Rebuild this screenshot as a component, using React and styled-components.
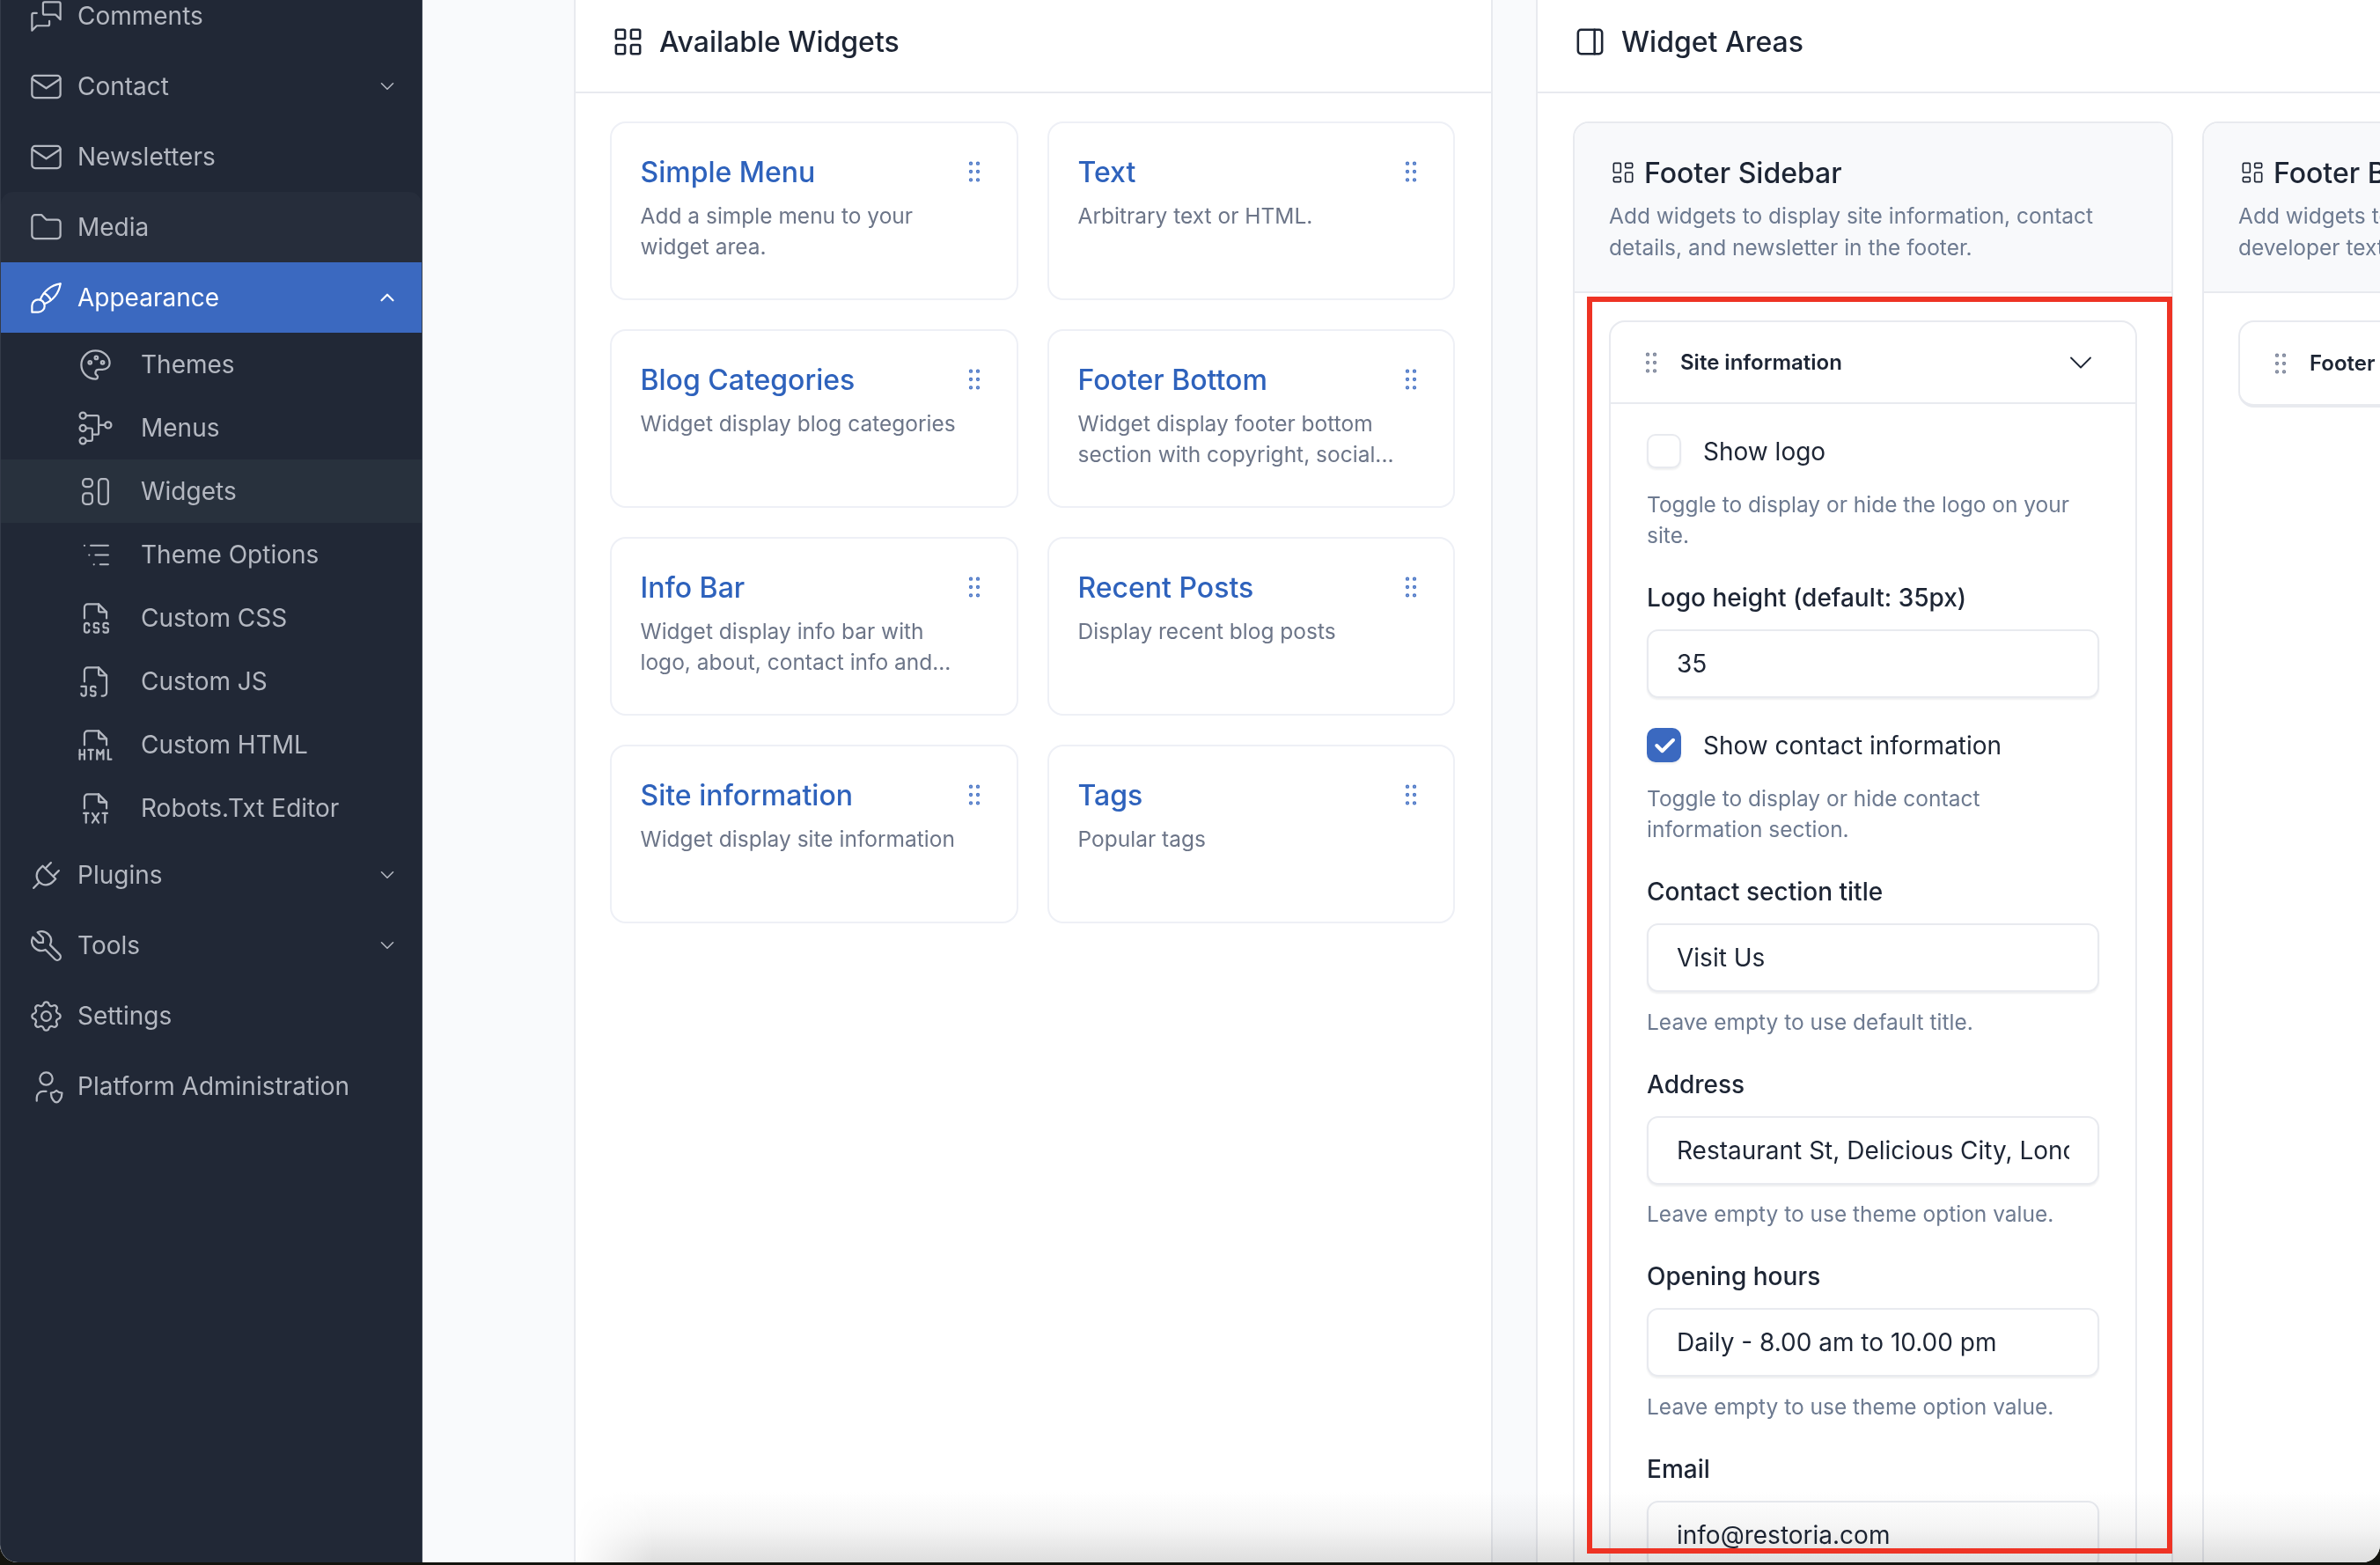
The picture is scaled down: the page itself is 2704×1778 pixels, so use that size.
import React from 'react';
import styled, { createGlobalStyle } from 'styled-components';
import {
  TbMessages, TbMail, TbFolder, TbBrush, TbPalette, TbTournament, TbLayout, TbListTree,
  TbFileTypeCss, TbFileTypeJs, TbFileTypeHtml, TbFileTypeTxt, TbPlug, TbTool, TbSettings,
  TbUserShield, TbChevronDown, TbChevronUp, TbLayoutGrid, TbLayoutSidebarRight,
  TbLayoutDashboard, TbGripVertical, TbCheck,
} from 'react-icons/tb';

const GlobalStyle = createGlobalStyle`
  html, body {
    margin: 0;
    height: 100%;
    overflow: hidden;
    background: #14140f;
  }
  * { box-sizing: border-box; }
  body { font-family: Inter, "Noto Sans", sans-serif; }
`;

const Screen = styled.div`
  position: relative;
  width: 2704px;
  height: 1775px;
  display: flex;
  overflow: hidden;
  background: #f9fafc;
  border-radius: 0 0 20px 20px;
`;

const Sidebar = styled.aside`
  flex: 0 0 480px;
  background: #212836;
  border-left: 1px solid #343b49;
  border-right: 1px solid #3a4250;
  border-bottom-left-radius: 20px;
  overflow: hidden;
`;

const NavList = styled.nav`
  margin-top: -22px;
`;

const NavRow = styled.div`
  height: 80px;
  display: flex;
  align-items: center;
  gap: 14px;
  padding: 0 26px 0 30px;
  font-size: 28px;
  color: ${(p) => (p.$active ? '#ffffff' : '#b4b8c1')};
  background: ${(p) => (p.$active ? '#3b69c0' : p.$soft ? '#262d3b' : 'transparent')};
  border-radius: ${(p) => (p.$soft ? '14px 14px 0 0' : '0')};
`;

const NavLabel = styled.span`
  flex: 1;
`;

const SubRow = styled.div`
  height: 72px;
  display: flex;
  align-items: center;
  gap: 30px;
  padding-left: 86px;
  font-size: 28px;
  color: #b4b8c1;
  background: ${(p) => (p.$current ? '#28313d' : 'transparent')};
`;

const Content = styled.main`
  flex: 1;
  min-width: 0;
  display: flex;
  gap: 49px;
  padding-left: 172px;
`;

const Panel = styled.section`
  flex: ${(p) => (p.$wide ? '0 0 1200px' : '0 0 1044px')};
  display: flex;
  flex-direction: column;
  background: #ffffff;
  border-left: 2px solid #e8eaef;
  border-right: ${(p) => (p.$wide ? '0' : '2px solid #e8eaef')};
`;

const PanelHead = styled.header`
  flex: none;
  height: 106px;
  display: flex;
  align-items: center;
  gap: 15px;
  padding: 0 0 9px 39px;
  border-bottom: 2px solid #e8eaef;
  font-size: 32px;
  font-weight: 500;
  color: #1d2534;
`;

const WidgetGrid = styled.div`
  display: grid;
  grid-template-columns: 464px 463px;
  gap: 33px;
  padding: 32px 0 0 39px;
  justify-content: start;
`;

const WidgetCard = styled.article`
  height: 203px;
  padding: 35px 32px 0 32.5px;
  background: #fff;
  border: 2px solid #eef0f6;
  border-radius: 18px;
`;

const CardTop = styled.div`
  display: flex;
  align-items: center;
  justify-content: space-between;
  height: 40px;
  margin-bottom: 13px;
`;

const CardTitle = styled.h3`
  margin: 0;
  font-size: 32px;
  font-weight: 500;
  color: #2e62bc;
`;

const CardText = styled.p`
  margin: 0;
  max-width: 372px;
  font-size: 24.5px;
  line-height: 35px;
  color: #6c7588;
`;

const Columns = styled.div`
  flex: 1;
  display: flex;
  gap: 33px;
  padding: 32px 0 0 40px;
`;

const AreaColumn = styled.div`
  flex: 0 0 682px;
  display: flex;
  flex-direction: column;
  border-radius: 18px 18px 0 0;
  border: 2px solid #e8eaef;
  border-bottom: 0;
`;

const AreaHead = styled.div`
  height: 193px;
  padding: 36px 20px 0 39px;
  background: #f8f9fb;
  border-bottom: 2px solid #e8eaef;
  border-radius: 16px 16px 0 0;
`;

const AreaTitle = styled.h2`
  display: flex;
  align-items: center;
  gap: 8px;
  height: 40px;
  margin: 0 0 12px;
  font-size: 32px;
  font-weight: 500;
  color: #1d2534;
`;

const AreaText = styled.p`
  margin: 0;
  font-size: 24.5px;
  line-height: 35.5px;
  color: #6d7a90;
`;

const AreaBody = styled.div`
  flex: 1;
  padding: 31px 39px 0;
`;

const Item = styled.div`
  width: ${(p) => (p.$open ? '600px' : '100%')};
  background: #fff;
  border: 2px solid #e8eaef;
  border-bottom-width: ${(p) => (p.$open ? '2px' : '4px')};
  border-radius: 18px 18px ${(p) => (p.$open ? '0 0' : '18px 18px')};
`;

const ItemHead = styled.div`
  height: 93px;
  display: flex;
  align-items: center;
  gap: 17px;
  padding: 0 40px 0 30px;
  font-size: 24px;
  font-weight: 600;
  color: #1d2534;
  white-space: nowrap;
  border-bottom: ${(p) => (p.$open ? '2px solid #e8eaef' : '0')};
`;

const ItemName = styled.span`
  flex: 1;
`;

const ItemBody = styled.div`
  padding: 34px 41px 0;
`;

const CheckRow = styled.div`
  display: flex;
  align-items: center;
  gap: 25px;
  height: 39px;
  margin-bottom: 24px;
  font-size: 28px;
  color: #1d2534;
`;

const CheckBox = styled.span`
  flex: none;
  width: 39px;
  height: 39px;
  display: flex;
  align-items: center;
  justify-content: center;
  color: #fff;
  border-radius: 10px;
  background: ${(p) => (p.$checked ? '#3b69c0' : '#fff')};
  border: ${(p) => (p.$checked ? '0' : '2px solid #e8eaef')};
  box-shadow: 0 2px 2px rgba(30, 40, 60, 0.07);
`;

const Field = styled.div`
  margin-bottom: ${(p) => (p.$tight ? '34px' : '36px')};
`;

const FieldLabel = styled.label`
  display: block;
  height: 35px;
  margin-bottom: 18px;
  font-size: 28px;
  line-height: 35px;
  font-weight: 500;
  color: #1d2534;
`;

const TextInput = styled.input`
  display: block;
  width: 100%;
  height: 78px;
  padding: 0 32px;
  font: 400 28px Inter, "Noto Sans", sans-serif;
  color: #1d2534;
  background: #fff;
  border: 2px solid #e8eaef;
  border-radius: 13px;
  box-shadow: 0 2px 2px rgba(30, 40, 60, 0.07);
  outline: none;
`;

const HelpText = styled.p`
  margin: ${(p) => (p.$afterInput ? '16.5px 0 0' : '0')};
  max-width: 500px;
  font-size: 24.5px;
  line-height: 35px;
  color: #6d7a90;
`;

const BottomFade = styled.div`
  position: absolute;
  left: 652px;
  right: 0;
  bottom: 0;
  height: 80px;
  pointer-events: none;
  background: linear-gradient(to bottom, #ffffff, #f5f5f5 50%, #dedede);
  mix-blend-mode: multiply;
  mask-image: linear-gradient(to right, transparent, #000 90px);
`;

const RedFrame = styled.div`
  position: absolute;
  left: 1803px;
  top: 337px;
  width: 665px;
  height: 1428px;
  border: 6px solid #ee3324;
  pointer-events: none;
`;

const icon = { size: 43, strokeWidth: 1.25 };

const navBefore = [
  { label: 'Comments', Icon: TbMessages },
  { label: 'Contact', Icon: TbMail, arrow: true },
  { label: 'Newsletters', Icon: TbMail },
  { label: 'Media', Icon: TbFolder, soft: true },
];

const subNav = [
  { label: 'Themes', Icon: TbPalette },
  { label: 'Menus', Icon: TbTournament },
  { label: 'Widgets', Icon: TbLayout, current: true },
  { label: 'Theme Options', Icon: TbListTree },
  { label: 'Custom CSS', Icon: TbFileTypeCss },
  { label: 'Custom JS', Icon: TbFileTypeJs },
  { label: 'Custom HTML', Icon: TbFileTypeHtml },
  { label: 'Robots.Txt Editor', Icon: TbFileTypeTxt },
];

const navAfter = [
  { label: 'Plugins', Icon: TbPlug, arrow: true },
  { label: 'Tools', Icon: TbTool, arrow: true },
  { label: 'Settings', Icon: TbSettings },
  { label: 'Platform Administration', Icon: TbUserShield },
];

const widgets = [
  ['Simple Menu', 'Add a simple menu to your widget area.'],
  ['Text', 'Arbitrary text or HTML.'],
  ['Blog Categories', 'Widget display blog categories'],
  ['Footer Bottom', 'Widget display footer bottom section with copyright, social...'],
  ['Info Bar', 'Widget display info bar with logo, about, contact info and...'],
  ['Recent Posts', 'Display recent blog posts'],
  ['Site information', 'Widget display site information'],
  ['Tags', 'Popular tags'],
];

const NavItem = ({ item }) => (
  <NavRow $soft={item.soft}>
    <item.Icon {...icon} />
    <NavLabel>{item.label}</NavLabel>
    {item.arrow && <TbChevronDown size={26} strokeWidth={1.5} />}
  </NavRow>
);

const App = () => (
  <Screen>
    <GlobalStyle />
    <Sidebar>
      <NavList>
        {navBefore.map((item) => <NavItem key={item.label} item={item} />)}
        <NavRow $active>
          <TbBrush {...icon} />
          <NavLabel>Appearance</NavLabel>
          <TbChevronUp size={26} strokeWidth={2} />
        </NavRow>
        {subNav.map(({ label, Icon, current }) => (
          <SubRow key={label} $current={current}>
            <Icon {...icon} />
            {label}
          </SubRow>
        ))}
        {navAfter.map((item) => <NavItem key={item.label} item={item} />)}
      </NavList>
    </Sidebar>

    <Content>
      <Panel>
        <PanelHead>
          <TbLayoutGrid size={41} strokeWidth={1.5} />
          Available Widgets
        </PanelHead>
        <WidgetGrid>
          {widgets.map(([title, text]) => (
            <WidgetCard key={title}>
              <CardTop>
                <CardTitle>{title}</CardTitle>
                <TbGripVertical size={32} strokeWidth={1.25} color="#4a76c6" />
              </CardTop>
              <CardText>{text}</CardText>
            </WidgetCard>
          ))}
        </WidgetGrid>
      </Panel>

      <Panel $wide>
        <PanelHead>
          <TbLayoutSidebarRight size={41} strokeWidth={1.5} />
          Widget Areas
        </PanelHead>
        <Columns>
          <AreaColumn>
            <AreaHead>
              <AreaTitle>
                <TbLayoutDashboard size={32} strokeWidth={1.25} />
                Footer Sidebar
              </AreaTitle>
              <AreaText>Add widgets to display site information, contact details, and newsletter in the footer.</AreaText>
            </AreaHead>
            <AreaBody>
              <Item $open>
                <ItemHead $open>
                  <TbGripVertical size={32} strokeWidth={1.25} color="#7b8499" />
                  <ItemName>Site information</ItemName>
                  <TbChevronDown size={44} strokeWidth={1} color="#1d2534" />
                </ItemHead>
                <ItemBody>
                  <CheckRow>
                    <CheckBox />
                    Show logo
                  </CheckRow>
                  <Field>
                    <HelpText>Toggle to display or hide the logo on your site.</HelpText>
                  </Field>
                  <Field $tight>
                    <FieldLabel>Logo height (default: 35px)</FieldLabel>
                    <TextInput readOnly value="35" />
                  </Field>
                  <CheckRow>
                    <CheckBox $checked><TbCheck size={30} strokeWidth={3.2} /></CheckBox>
                    Show contact information
                  </CheckRow>
                  <Field>
                    <HelpText>Toggle to display or hide contact information section.</HelpText>
                  </Field>
                  <Field>
                    <FieldLabel>Contact section title</FieldLabel>
                    <TextInput readOnly value="Visit Us" />
                    <HelpText $afterInput>Leave empty to use default title.</HelpText>
                  </Field>
                  <Field>
                    <FieldLabel>Address</FieldLabel>
                    <TextInput readOnly value="Restaurant St, Delicious City, London 9578, UK" />
                    <HelpText $afterInput>Leave empty to use theme option value.</HelpText>
                  </Field>
                  <Field>
                    <FieldLabel>Opening hours</FieldLabel>
                    <TextInput readOnly value="Daily - 8.00 am to 10.00 pm" />
                    <HelpText $afterInput>Leave empty to use theme option value.</HelpText>
                  </Field>
                  <Field $tight>
                    <FieldLabel>Email</FieldLabel>
                    <TextInput readOnly value="info@restoria.com" />
                  </Field>
                </ItemBody>
              </Item>
            </AreaBody>
          </AreaColumn>

          <AreaColumn>
            <AreaHead>
              <AreaTitle>
                <TbLayoutDashboard size={32} strokeWidth={1.25} />
                Footer Bottom
              </AreaTitle>
              <AreaText>Add widgets to display copyright information, developer text, and social links.</AreaText>
            </AreaHead>
            <AreaBody>
              <Item>
                <ItemHead>
                  <TbGripVertical size={32} strokeWidth={1.25} color="#7b8499" />
                  <ItemName>Footer Bottom</ItemName>
                </ItemHead>
              </Item>
            </AreaBody>
          </AreaColumn>
        </Columns>
      </Panel>
    </Content>

    <BottomFade />
    <RedFrame />
  </Screen>
);

export default App;
